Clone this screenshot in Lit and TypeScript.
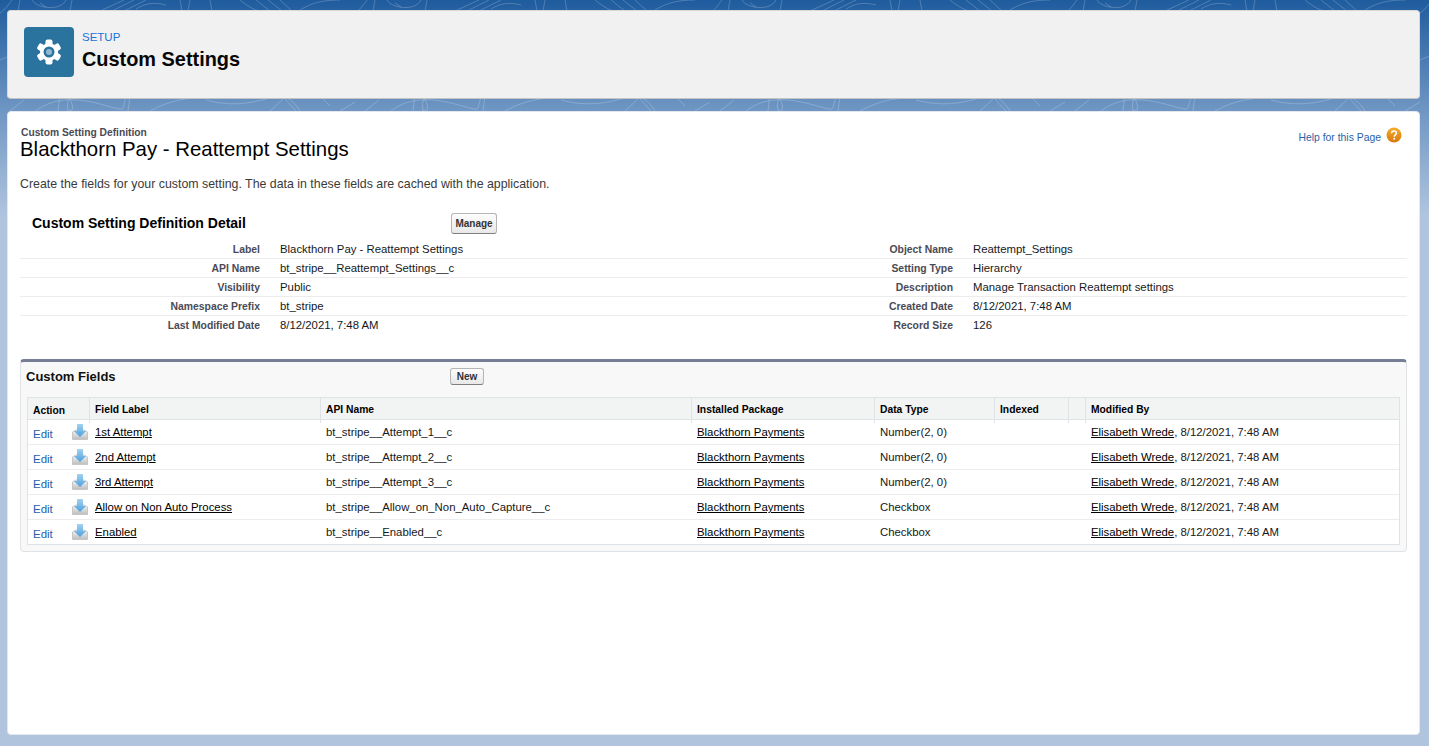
import {LitElement, html, css, svg} from 'lit';
import {customElement} from 'lit/decorators.js';

const DETAIL_ROWS = [
    ['Label', 'Blackthorn Pay - Reattempt Settings', 'Object Name', 'Reattempt_Settings'],
    ['API Name', 'bt_stripe__Reattempt_Settings__c', 'Setting Type', 'Hierarchy'],
    ['Visibility', 'Public', 'Description', 'Manage Transaction Reattempt settings'],
    ['Namespace Prefix', 'bt_stripe', 'Created Date', '8/12/2021, 7:48 AM'],
    ['Last Modified Date', '8/12/2021, 7:48 AM', 'Record Size', '126'],
];

const FIELDS = [
    ['1st Attempt', 'bt_stripe__Attempt_1__c', 'Number(2, 0)'],
    ['2nd Attempt', 'bt_stripe__Attempt_2__c', 'Number(2, 0)'],
    ['3rd Attempt', 'bt_stripe__Attempt_3__c', 'Number(2, 0)'],
    ['Allow on Non Auto Process', 'bt_stripe__Allow_on_Non_Auto_Capture__c', 'Checkbox'],
    ['Enabled', 'bt_stripe__Enabled__c', 'Checkbox'],
];

// background contour tile, the texture repeats about every 355px
const contours = svg`
    <path d="M12 0C8 5 6 9 0 13M20 0 18 11M32 0C36 8 60 12 66 0M40 3 46 7M72 0 70 11"/>
    <path d="M100 11 124 0M112 11 134 0M124 11 146 0M136 9C146 3 154 2 166 5M180 0 182 11M190 0 188 11M210 0 212 11"/>
    <path d="M240 0C250 8 256 11 262 11M256 0 270 11M268 0 282 11M280 0 292 11M300 10C310 4 320 0 340 0"/>
    <path d="M0 60C40 40 90 70 130 50S220 20 260 50 330 80 355 60"/>
    <path d="M30 30C60 20 80 50 120 35M200 70C230 50 290 60 330 40"/>
    <path d="M10 111 24 100M36 111C50 100 70 96 100 104S120 111 126 98M60 94 58 111M68 111C66 100 70 95 72 104 74 111 70 111 68 111"/>
    <path d="M130 96 128 111M150 111C170 100 190 96 220 98M206 100C220 104 240 106 262 100S290 96 300 111M270 111 284 98 296 111M320 96 330 106M340 111 355 102"/>
`;

@customElement('app-root')
export class AppRoot extends LitElement {

    static override styles = css`
        :host {
            display: block;
            height: 746px;
            overflow: hidden;
            position: relative;
            box-sizing: border-box;
            padding: 10px 9px 11px 7px;
            font-family: "Liberation Sans", Arial, sans-serif;
            font-size: 11.36px;
            color: #16181a;
            background: linear-gradient(#1f5c9e 0, #6f96c3 110px, #b0c4de 215px, #b0c4de 100%);
        }

        .contours {
            position: absolute;
            left: 0;
            top: 0;
            width: 1429px;
            height: 111px;
        }

        .contours path {
            fill: none;
            stroke: rgba(255, 255, 255, 0.2);
            stroke-width: 1;
        }

        .page {
            position: relative;
            display: flex;
            flex-direction: column;
            gap: 12px;
            height: 100%;
        }

        .page-header {
            height: 89px;
            box-sizing: border-box;
            display: flex;
            align-items: center;
            gap: 8px;
            padding: 0 16px 6px;
            background: #f1f1f1;
            border: 1px solid #d8d8d8;
            border-bottom-color: #c4c4c4;
            border-radius: 4px;
        }

        .gear-tile {
            width: 50px;
            height: 50px;
            border-radius: 4px;
            background: #2a739f;
            display: flex;
            align-items: center;
            justify-content: center;
        }

        .eyebrow {
            font-size: 11.5px;
            line-height: 14px;
            color: #1a73d9;
        }

        .title {
            font-size: 19.9px;
            line-height: 30px;
            font-weight: 700;
            color: #080707;
        }

        .content {
            flex: 1;
            box-sizing: border-box;
            padding: 15px 12px 0 12px;
            background: #fff;
            border: 1px solid #e4e8ee;
            border-radius: 4px;
        }

        .crumb-row {
            display: flex;
            justify-content: space-between;
        }

        .crumb {
            font-size: 10.25px;
            line-height: 12px;
            font-weight: 700;
            color: #4a4a56;
            padding-left: 1px;
        }

        .heading {
            font-size: 20.4px;
            line-height: 21px;
            color: #000;
        }

        .help {
            display: flex;
            align-items: center;
            gap: 5px;
            padding: 1px 5px 0 0;
            height: 18px;
            color: #2a5fa8;
            font-size: 10.4px;
        }

        .help svg {
            margin-top: -4px;
        }

        .intro {
            margin-top: 17px;
            font-size: 12.37px;
            line-height: 14px;
            color: #3a3a3a;
        }

        .detail-head {
            display: flex;
            align-items: center;
            height: 24px;
            margin-top: 20px;
            padding-left: 12px;
        }

        .detail-title {
            width: 419px;
            font-size: 14px;
            font-weight: 700;
            color: #000;
        }

        .btn {
            box-sizing: border-box;
            border: 1px solid #b5b5b5;
            border-bottom-color: #7f7f7f;
            border-radius: 3px;
            background: linear-gradient(#fdfdfd, #e8e8e9);
            font-weight: 700;
            font-size: 10px;
            color: #333;
            display: flex;
            align-items: center;
            justify-content: center;
        }

        .manage {
            width: 46px;
            height: 21px;
        }

        .new {
            width: 34px;
            height: 17px;
        }

        .detail-table {
            margin-top: 5px;
            width: 1387px;
        }

        .detail-row {
            display: grid;
            grid-template-columns: 240px 453px 240px 1fr;
            height: 19px;
            align-items: center;
            border-bottom: 1px solid #ececec;
            box-sizing: border-box;
            line-height: 18px;
        }

        .detail-row:last-child {
            border-bottom-color: transparent;
        }

        .detail-label {
            text-align: right;
            font-size: 10.4px;
            line-height: 16px;
            font-weight: 700;
            color: #4a4a56;
            margin-top: 2px;
        }

        .detail-value {
            padding-left: 20px;
        }

        .panel {
            width: 1387px;
            box-sizing: border-box;
            margin-top: 24px;
            height: 193px;
            background: #f8f8f8;
            border: 1px solid #e0e3e5;
            border-top: 3px solid #767e96;
            border-radius: 4px;
            padding: 0 5px;
        }

        .panel-head {
            display: flex;
            align-items: center;
            height: 28px;
        }

        .panel-title {
            width: 424px;
            font-size: 13px;
            font-weight: 700;
            color: #111;
        }

        .table {
            margin: 7px 0 0 1px;
            width: 1373px;
            background: #fff;
            border: 1px solid #e0e3e5;
            box-sizing: border-box;
        }

        .thead, .tr {
            display: grid;
            grid-template-columns: 61px 231px 371px 183px 120px 74px 17px 1fr;
        }

        .thead {
            height: 22px;
            background: #f2f3f3;
            border-bottom: 1px solid #e0e3e5;
            box-sizing: border-box;
            font-size: 10.3px;
            font-weight: 700;
            color: #000;
        }

        .th {
            padding: 0 5px;
            line-height: 23px;
            border-left: 1px solid #e0e3e5;
        }

        .th:first-child {
            border-left: none;
            line-height: 25px;
        }

        .tr {
            height: 25px;
            box-sizing: border-box;
            border-bottom: 1px solid #ececec;
            line-height: 24px;
        }

        .tr:last-child {
            height: 24px;
            border-bottom: none;
        }

        .td {
            padding-left: 6px;
            white-space: nowrap;
        }

        .action {
            display: flex;
            justify-content: space-between;
            padding: 0 1px 0 5px;
        }

        .edit {
            color: #1f5fa9;
            font-size: 11.5px;
            line-height: 28px;
        }

        .import {
            display: block;
            margin-top: 4px;
        }

        .link {
            color: #000;
            text-decoration: underline;
        }
    `;

    renderGear() {
        const teeth = [0, 60, 120, 180, 240, 300];
        return html`<svg width="26" height="26" viewBox="0 0 26 26">
            <circle cx="13" cy="13" r="9" fill="#fff"/>
            ${teeth.map((a) => svg`<rect x="9.5" y="0.5" width="7" height="7" rx="2" fill="#fff" transform="rotate(${a} 13 13)"/>`)}
            <circle cx="13" cy="13" r="5.5" fill="#2a739f"/>
            <circle cx="13" cy="13" r="3" fill="#8fb8d2"/>
        </svg>`;
    }

    renderHelpIcon() {
        return html`<svg width="16" height="16" viewBox="0 0 16 16">
            <defs>
                <linearGradient id="help" x1="0" y1="0" x2="0" y2="1">
                    <stop offset="0" stop-color="#f4ae2e"/>
                    <stop offset="1" stop-color="#d9780d"/>
                </linearGradient>
            </defs>
            <circle cx="8" cy="8" r="7.5" fill="url(#help)"/>
            <path d="M5.6 6.2C5.7 4.7 6.7 4 8 4s2.4.8 2.4 2.1c0 1.8-2.2 1.8-2.2 3.6" fill="none" stroke="#fff" stroke-width="1.5"/>
            <circle cx="8.2" cy="11.8" r="1" fill="#fff"/>
        </svg>`;
    }

    renderImportIcon() {
        return html`<svg class="import" width="16" height="16" viewBox="0 0 16 16">
            <defs>
                <linearGradient id="tray" x1="0" y1="0" x2="0" y2="1">
                    <stop offset="0" stop-color="#f8f8f8"/>
                    <stop offset="1" stop-color="#bcbcbc"/>
                </linearGradient>
                <linearGradient id="arrow" x1="0" y1="0" x2="0" y2="1">
                    <stop offset="0" stop-color="#a3d3f0"/>
                    <stop offset="1" stop-color="#4ba0de"/>
                </linearGradient>
            </defs>
            <path d="M.5 8 4 6h8l3.5 2v7.5H.5z" fill="url(#tray)" stroke="#c6c6c6"/>
            <path d="M5 0h6v7h3l-6 6-6-6h3z" fill="url(#arrow)"/>
        </svg>`;
    }

    override render() {
        return html`
        <svg class="contours" viewBox="0 0 1429 111">
            <defs>
                <pattern id="topo" width="355" height="111" patternUnits="userSpaceOnUse">${contours}</pattern>
            </defs>
            <rect width="1429" height="111" fill="url(#topo)"/>
        </svg>
        <div class="page">
            <div class="page-header">
                <div class="gear-tile">${this.renderGear()}</div>
                <div>
                    <div class="eyebrow">SETUP</div>
                    <div class="title">Custom Settings</div>
                </div>
            </div>
            <div class="content">
                <div class="crumb-row">
                    <div>
                        <div class="crumb">Custom Setting Definition</div>
                        <div class="heading">Blackthorn Pay - Reattempt Settings</div>
                    </div>
                    <div class="help">Help for this Page ${this.renderHelpIcon()}</div>
                </div>
                <div class="intro">Create the fields for your custom setting. The data in these fields are cached with the application.</div>
                <div class="detail-head">
                    <div class="detail-title">Custom Setting Definition Detail</div>
                    <div class="btn manage">Manage</div>
                </div>
                <div class="detail-table">
                    ${DETAIL_ROWS.map((r) => html`
                        <div class="detail-row">
                            <div class="detail-label">${r[0]}</div>
                            <div class="detail-value">${r[1]}</div>
                            <div class="detail-label">${r[2]}</div>
                            <div class="detail-value">${r[3]}</div>
                        </div>
                    `)}
                </div>
                <div class="panel">
                    <div class="panel-head">
                        <div class="panel-title">Custom Fields</div>
                        <div class="btn new">New</div>
                    </div>
                    <div class="table">
                        <div class="thead">
                            <div class="th">Action</div>
                            <div class="th">Field Label</div>
                            <div class="th">API Name</div>
                            <div class="th">Installed Package</div>
                            <div class="th">Data Type</div>
                            <div class="th">Indexed</div>
                            <div class="th"></div>
                            <div class="th">Modified By</div>
                        </div>
                        ${FIELDS.map((f) => html`
                            <div class="tr">
                                <div class="td action"><span class="edit">Edit</span>${this.renderImportIcon()}</div>
                                <div class="td"><span class="link">${f[0]}</span></div>
                                <div class="td">${f[1]}</div>
                                <div class="td"><span class="link">Blackthorn Payments</span></div>
                                <div class="td">${f[2]}</div>
                                <div class="td"></div>
                                <div class="td"></div>
                                <div class="td"><span class="link">Elisabeth Wrede</span>, 8/12/2021, 7:48 AM</div>
                            </div>
                        `)}
                    </div>
                </div>
            </div>
        </div>
        `;
    }
}
